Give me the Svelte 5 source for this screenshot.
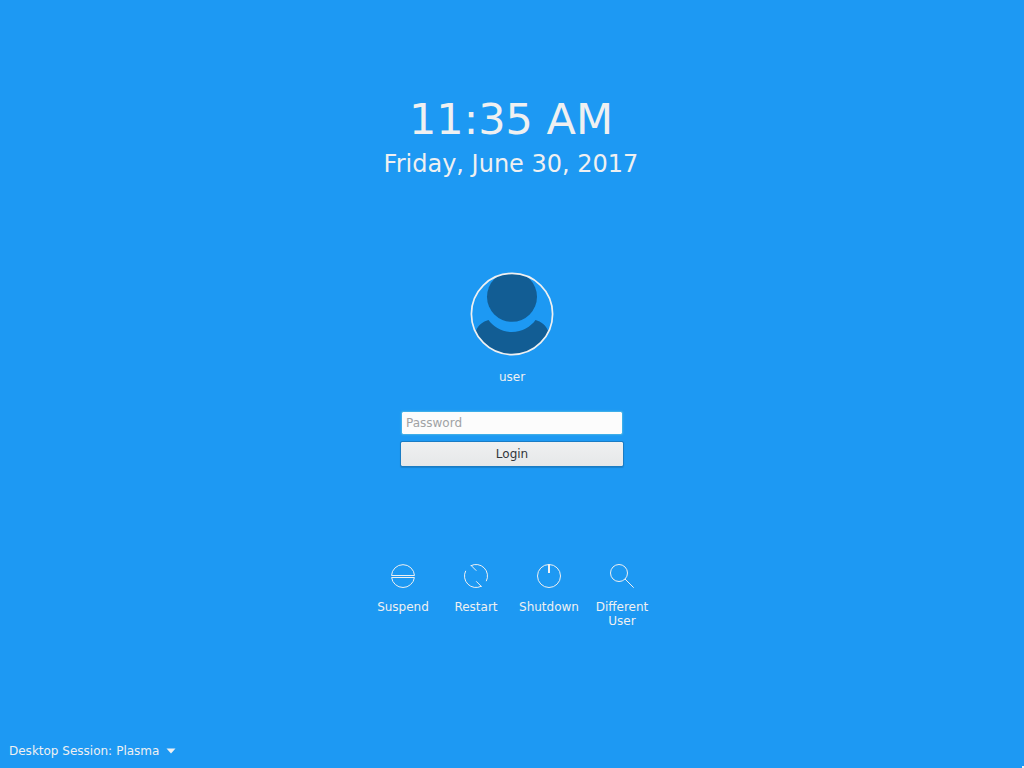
<script>
  let password = $state('');
  let session = $state('plasma');

  const time = '11:35 AM';
  const date = 'Friday, June 30, 2017';

  const actions = [
    { id: 'suspend', label: 'Suspend' },
    { id: 'restart', label: 'Restart' },
    { id: 'shutdown', label: 'Shutdown' },
    { id: 'switch', label: 'Different User' }
  ];
</script>

<div class="screen">
  <header class="clock">
    <time class="time">{time}</time>
    <time class="date" datetime="2017-06-30">{date}</time>
  </header>

  <main>
    <div class="account">
      <svg class="avatar" viewBox="0 0 84 84" aria-hidden="true">
        <defs>
          <clipPath id="face"><circle cx="42" cy="42" r="40.5" /></clipPath>
        </defs>
        <g clip-path="url(#face)" fill="#125d94">
          <circle cx="42" cy="24.8" r="25" />
          <path d="M18.5 48C23 54.500 32 60 42 60S61 54.500 65.500 48C71 49.500 76.500 53.500 78 59V84H6V59C7.500 53.500 13 49.500 18.500 48Z" />
        </g>
        <circle cx="42" cy="42" r="40.6" fill="none" stroke="#eff0f1" stroke-width="1.7" />
      </svg>
      <span class="name">user</span>
    </div>

    <form class="login" onsubmit={(e) => e.preventDefault()}>
      <input type="password" placeholder="Password" aria-label="Password" bind:value={password} />
      <button type="submit">Login</button>
    </form>
  </main>

  <nav class="actions">
    {#each actions as action (action.id)}
      <button class="action" type="button">
        <svg viewBox="0 0 32 32" fill="none" stroke="currentColor" aria-hidden="true">
          {#if action.id === 'suspend'}
            <path d="M4.520 15.500A11.500 11.500 0 0 1 27.480 15.500ZM4.600 17.500H27.400A11.500 11.500 0 0 1 4.600 17.500Z" />
          {:else if action.id === 'restart'}
            <path d="M10.800 5.740A11.500 11.500 0 0 1 26.260 21.200M10.800 5.200L16.300 10.700M21.200 26.260A11.500 11.500 0 0 1 5.740 10.800M21.700 26.800L16.200 21.300" />
          {:else if action.id === 'shutdown'}
            <circle cx="16" cy="16" r="11.500" />
            <path stroke-width="2" d="M16 4V13" />
          {:else}
            <circle cx="13" cy="13" r="8.500" />
            <path d="M19 19L27.700 27.700" />
          {/if}
        </svg>
        <span>{action.label}</span>
      </button>
    {/each}
  </nav>

  <footer>
    <label for="session">Desktop Session:</label>
    <div class="picker">
      <select id="session" bind:value={session}>
        <option value="plasma">Plasma</option>
      </select>
      <svg viewBox="0 0 10 6" aria-hidden="true"><path d="M0.500 0.500H9.500L5 5.500Z" fill="currentColor" /></svg>
    </div>
  </footer>

  <span class="pointer" aria-hidden="true"></span>
</div>

<style>
  :global(body) {
    margin: 0;
    background: #1d99f3;
  }

  .screen {
    box-sizing: border-box;
    display: flex;
    flex-direction: column;
    align-items: center;
    min-height: 100vh;
    padding: 94px 9px 10px;
    color: #eff0f1;
    background: #1d99f3;
    font: 12px/14px "DejaVu Sans", sans-serif;
  }

  button,
  input,
  select {
    box-sizing: border-box;
    margin: 0;
    font: inherit;
    color: inherit;
  }

  .clock {
    display: flex;
    flex-direction: column;
    align-items: center;
    gap: 6px;
    padding-right: 2px;
  }

  .time {
    font-size: 43px;
    line-height: 50px;
  }

  .date {
    font-size: 24px;
    line-height: 28px;
  }

  main {
    display: flex;
    flex-direction: column;
    align-items: center;
    gap: 27px;
    margin-top: 94px;
  }

  .account {
    display: flex;
    flex-direction: column;
    align-items: center;
    gap: 14px;
  }

  .avatar {
    width: 84px;
    height: 84px;
  }

  .login {
    display: flex;
    flex-direction: column;
    align-items: center;
    gap: 6px;
    width: 224px;
  }

  .login input {
    width: 222px;
    height: 24px;
    padding: 0 4px;
    border: 1px solid #3daee9;
    border-radius: 2px;
    outline: none;
    color: #31363b;
    background: #fcfcfc;
    background-clip: padding-box;
    box-shadow: 0 0 2px #3daee9;
  }

  .login input::placeholder {
    color: #a0a2a4;
    opacity: 1;
  }

  .login button {
    width: 100%;
    height: 26px;
    padding: 0;
    border: 1px solid #1a7cc4;
    border-radius: 2px;
    color: #31363b;
    background: linear-gradient(#eff0f1, #e6e8e9);
    background-clip: padding-box;
    box-shadow: 0 1px 1px rgb(0 0 0 / 15%);
  }

  .actions {
    display: flex;
    align-items: flex-start;
    margin-top: 93px;
  }

  .action {
    display: flex;
    flex-direction: column;
    align-items: center;
    gap: 8px;
    width: 72px;
    margin-left: 1px;
    padding: 0;
    border: 0;
    background: none;
  }

  .action svg {
    width: 32px;
    height: 32px;
  }

  footer {
    display: flex;
    align-items: center;
    align-self: flex-start;
    gap: 4px;
    margin-top: auto;
  }

  .picker {
    display: grid;
    align-items: center;
  }

  .picker select {
    grid-area: 1 / 1;
    appearance: none;
    height: 14px;
    padding: 0 16px 0 0;
    border: 0;
    background: none;
  }

  .picker svg {
    grid-area: 1 / 1;
    justify-self: end;
    width: 10px;
    height: 6px;
    pointer-events: none;
  }

  /* tip of the mouse pointer, parked in the screen corner */
  .pointer {
    position: fixed;
    right: 0;
    bottom: 0;
    width: 2px;
    height: 2px;
    background: #eff0f1;
    pointer-events: none;
  }
</style>
